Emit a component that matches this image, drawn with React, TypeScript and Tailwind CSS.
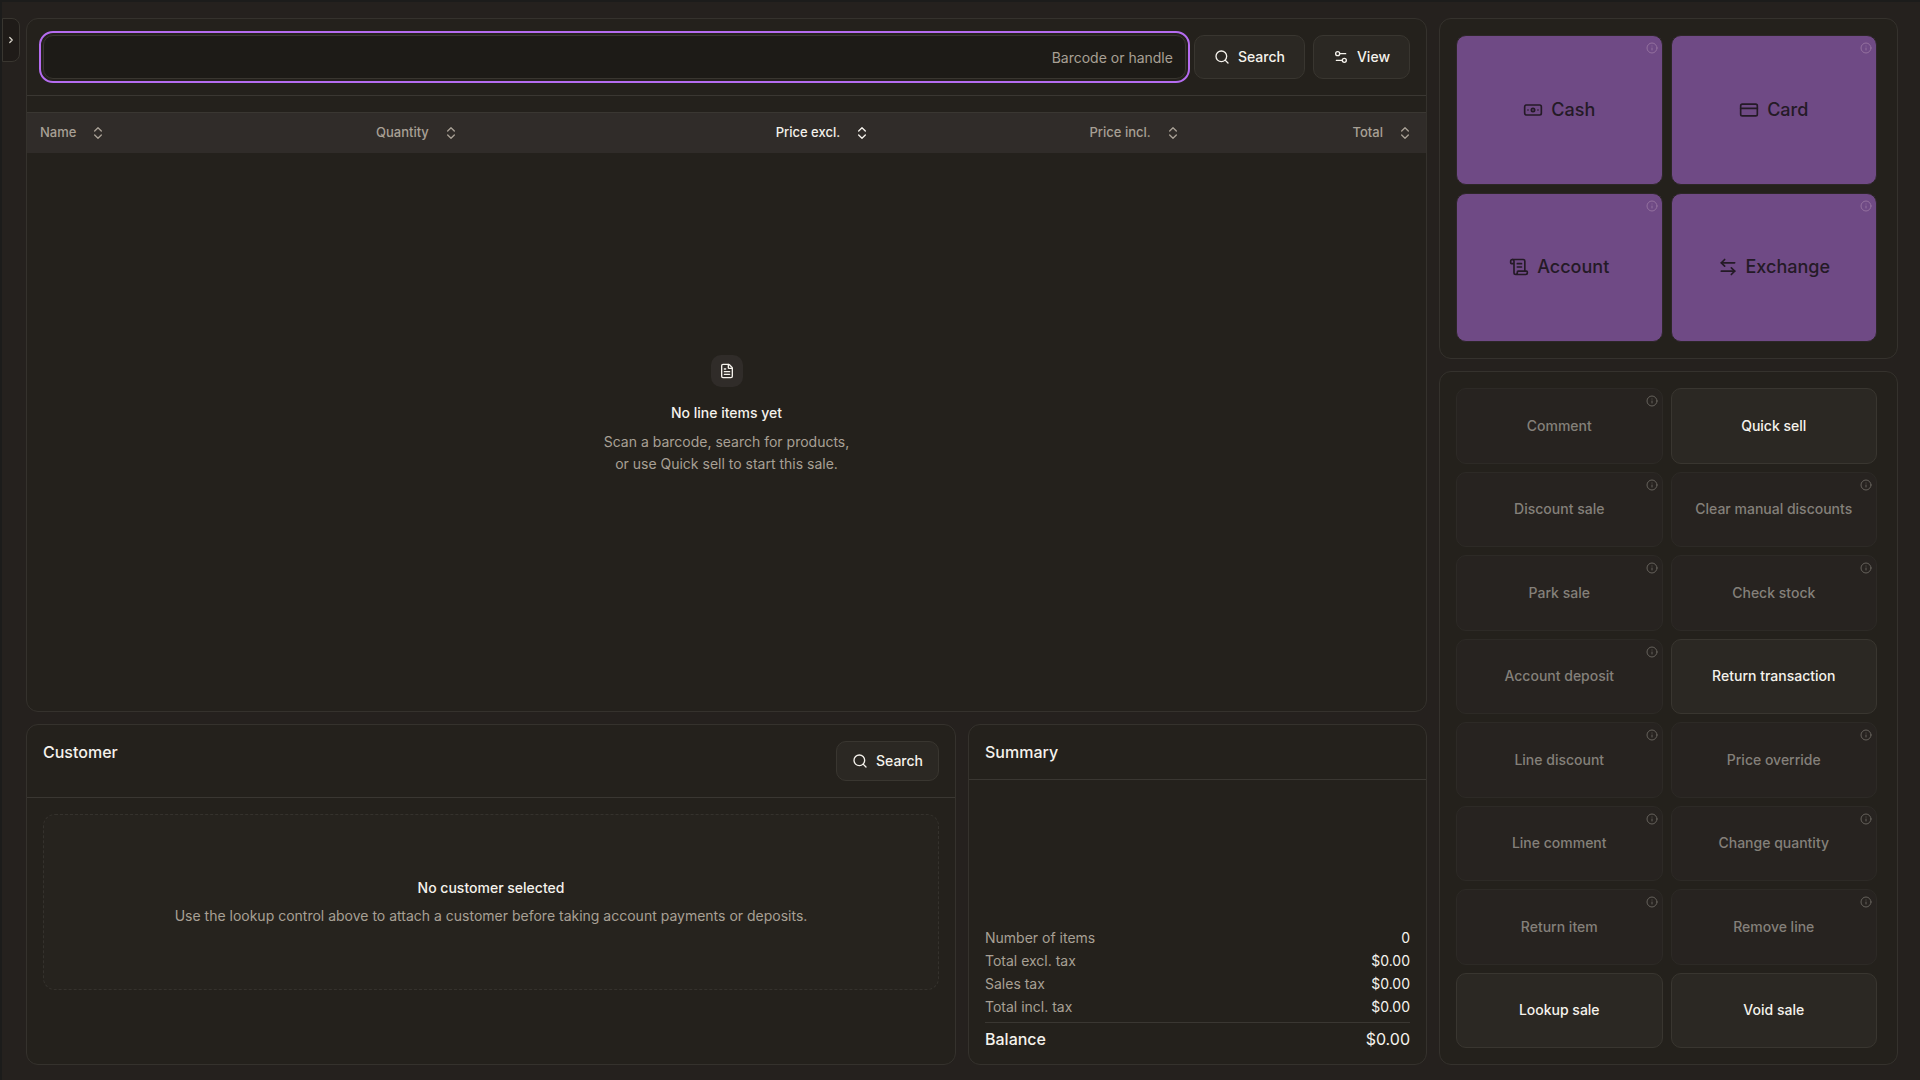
import React from 'react';
import { ArrowLeftRight, Banknote, ChevronRight, ChevronsUpDown, CreditCard, FileText, Info, ScrollText, Search, Settings2 } from 'lucide-react';
import type { LucideIcon } from 'lucide-react';

interface Column {
  label: string;
  width: string;
  active?: boolean;
}

interface Action {
  label: string;
  enabled?: boolean;
}

const columns: Column[] = [
  { label: 'Name', width: 'w-[16%]' },
  { label: 'Quantity', width: 'w-[15.8%]' },
  { label: 'Price excl.', width: 'w-[29.4%]', active: true },
  { label: 'Price incl.', width: 'w-[22.2%]' },
  { label: 'Total', width: 'w-[16.6%]' },
];

const payments: { label: string; icon: LucideIcon }[] = [
  { label: 'Cash', icon: Banknote },
  { label: 'Card', icon: CreditCard },
  { label: 'Account', icon: ScrollText },
  { label: 'Exchange', icon: ArrowLeftRight },
];

const actions: Action[] = [
  { label: 'Comment' },
  { label: 'Quick sell', enabled: true },
  { label: 'Discount sale' },
  { label: 'Clear manual discounts' },
  { label: 'Park sale' },
  { label: 'Check stock' },
  { label: 'Account deposit' },
  { label: 'Return transaction', enabled: true },
  { label: 'Line discount' },
  { label: 'Price override' },
  { label: 'Line comment' },
  { label: 'Change quantity' },
  { label: 'Return item' },
  { label: 'Remove line' },
  { label: 'Lookup sale', enabled: true },
  { label: 'Void sale', enabled: true },
];

const totals = [
  { label: 'Number of items', value: '0' },
  { label: 'Total excl. tax', value: '$0.00' },
  { label: 'Sales tax', value: '$0.00' },
  { label: 'Total incl. tax', value: '$0.00' },
];

const card = 'rounded-xl border border-[#35322d] bg-[#24211c]';
const button = 'flex items-center justify-center gap-2 rounded-[10px] border border-[#393630] bg-[#2b2823] font-medium text-[#f5f2ec]';

const LineItems: React.FC = () => (
  <section className={`col-span-3 row-span-2 flex flex-col overflow-hidden ${card}`}>
    <div className="flex gap-2 border-b border-[#3a3732] p-4">
      <input
        type="text"
        aria-label="Barcode or handle"
        placeholder="Barcode or handle"
        className="h-11 min-w-0 flex-1 rounded-[10px] border border-[#393630] bg-[#1d1b17] px-3 text-right text-[#f5f2ec] outline-2 outline-offset-2 outline-[#b56cf0] placeholder:text-[#a8a095]"
      />
      <button type="button" className={`h-11 px-[19px] ${button}`}>
        <Search size={16} />
        Search
      </button>
      <button type="button" className={`h-11 px-[19px] ${button}`}>
        <Settings2 size={16} />
        View
      </button>
    </div>
    <table className="mt-4 w-full table-fixed text-[13px]">
      <thead>
        <tr className="h-10 border-t border-[#3a3732] bg-[#302c29]">
          {columns.map((column, i) => (
            <th key={column.label} className={`px-[13px] font-medium ${column.width} ${column.active ? 'text-[#f5f2ec]' : 'text-[#a8a095]'}`}>
              <button type="button" className={`flex items-center gap-3.5 ${i === 0 ? '' : 'ml-auto'}`}>
                {column.label}
                <ChevronsUpDown size={16} />
              </button>
            </th>
          ))}
        </tr>
      </thead>
    </table>
    <div className="flex flex-1 flex-col items-center justify-center pb-[34px] text-center">
      <div className="flex size-8 items-center justify-center rounded-[10px] bg-[#302c29] text-[#f5f2ec]">
        <FileText size={16} />
      </div>
      <h2 className="mt-4 font-medium leading-5 text-[#f5f2ec]">No line items yet</h2>
      <p className="mt-2 leading-[22px] text-[#a8a095]">
        Scan a barcode, search for products,
        <br />
        or use Quick sell to start this sale.
      </p>
    </div>
  </section>
);

const Payments: React.FC = () => (
  <section className={`grid grid-cols-2 grid-rows-2 gap-2 p-4 pr-5 ${card}`}>
    {payments.map(({ label, icon: Icon }) => (
      <button
        key={label}
        type="button"
        disabled
        className="relative flex items-center justify-center gap-2 rounded-[10px] border border-[#2d2628] bg-[#6f4a85] text-lg font-medium text-[#241a26]"
      >
        <Icon size={20} />
        {label}
        <Info size={12} className="absolute right-1 top-1.5 text-[#94719f]" />
      </button>
    ))}
  </section>
);

const Actions: React.FC = () => (
  <section className={`row-span-2 grid auto-rows-fr grid-cols-2 gap-2 p-4 pr-5 ${card}`}>
    {actions.map(({ label, enabled }) =>
      enabled ? (
        <button key={label} type="button" className={button}>
          {label}
        </button>
      ) : (
        <button
          key={label}
          type="button"
          disabled
          className="relative flex items-center justify-center rounded-[10px] border border-[#2d2a26] bg-[#272320] font-medium text-[#84807a]"
        >
          {label}
          <Info size={12} className="absolute right-1 top-1.5 text-[#66625c]" />
        </button>
      ),
    )}
  </section>
);

const Customer: React.FC = () => (
  <section className={`col-span-2 ${card}`}>
    <div className="flex items-start justify-between border-b border-[#3a3732] p-4">
      <h2 className="text-base font-medium leading-[22px] text-[#f5f2ec]">Customer</h2>
      <button type="button" className={`h-10 px-[15px] ${button}`}>
        <Search size={16} />
        Search
      </button>
    </div>
    <div className="m-4 flex h-44 flex-col items-center justify-center rounded-xl border border-dashed border-[#35322d] bg-[#26231e] text-center">
      <h3 className="font-medium leading-5 text-[#f5f2ec]">No customer selected</h3>
      <p className="mt-2 leading-5 text-[#a8a095]">Use the lookup control above to attach a customer before taking account payments or deposits.</p>
    </div>
  </section>
);

const Summary: React.FC = () => (
  <section className={`flex flex-col ${card}`}>
    <h2 className="border-b border-[#3a3732] p-4 text-base font-medium leading-[22px] text-[#f5f2ec]">Summary</h2>
    <dl className="mt-auto px-4 pb-[13px]">
      {totals.map((row) => (
        <div key={row.label} className="flex justify-between leading-[23px]">
          <dt className="text-[#a8a095]">{row.label}</dt>
          <dd className="text-[#f5f2ec]">{row.value}</dd>
        </div>
      ))}
      <div className="mt-1 flex justify-between border-t border-[#3a3732] pt-1 text-base text-[#f5f2ec]">
        <dt className="font-medium">Balance</dt>
        <dd>$0.00</dd>
      </div>
    </dl>
  </section>
);

const App: React.FC = () => {
  return (
    <div className="flex min-h-screen border-l-2 border-t-2 border-[#1c1c1b] bg-[#25211e] pb-[15px] pr-[22px] pt-4 font-['Inter',sans-serif] text-sm">
      <button
        type="button"
        aria-label="Open menu"
        className="mr-1.5 flex h-11 w-[18px] items-center justify-center rounded-r-lg border border-[#393630] bg-[#1f1b18] text-[#d8d3ca]"
      >
        <ChevronRight size={10} strokeWidth={3} />
      </button>
      <main className="grid flex-1 grid-cols-4 grid-rows-3 gap-3">
        <LineItems />
        <Payments />
        <Actions />
        <Customer />
        <Summary />
      </main>
    </div>
  );
};

export default App;
